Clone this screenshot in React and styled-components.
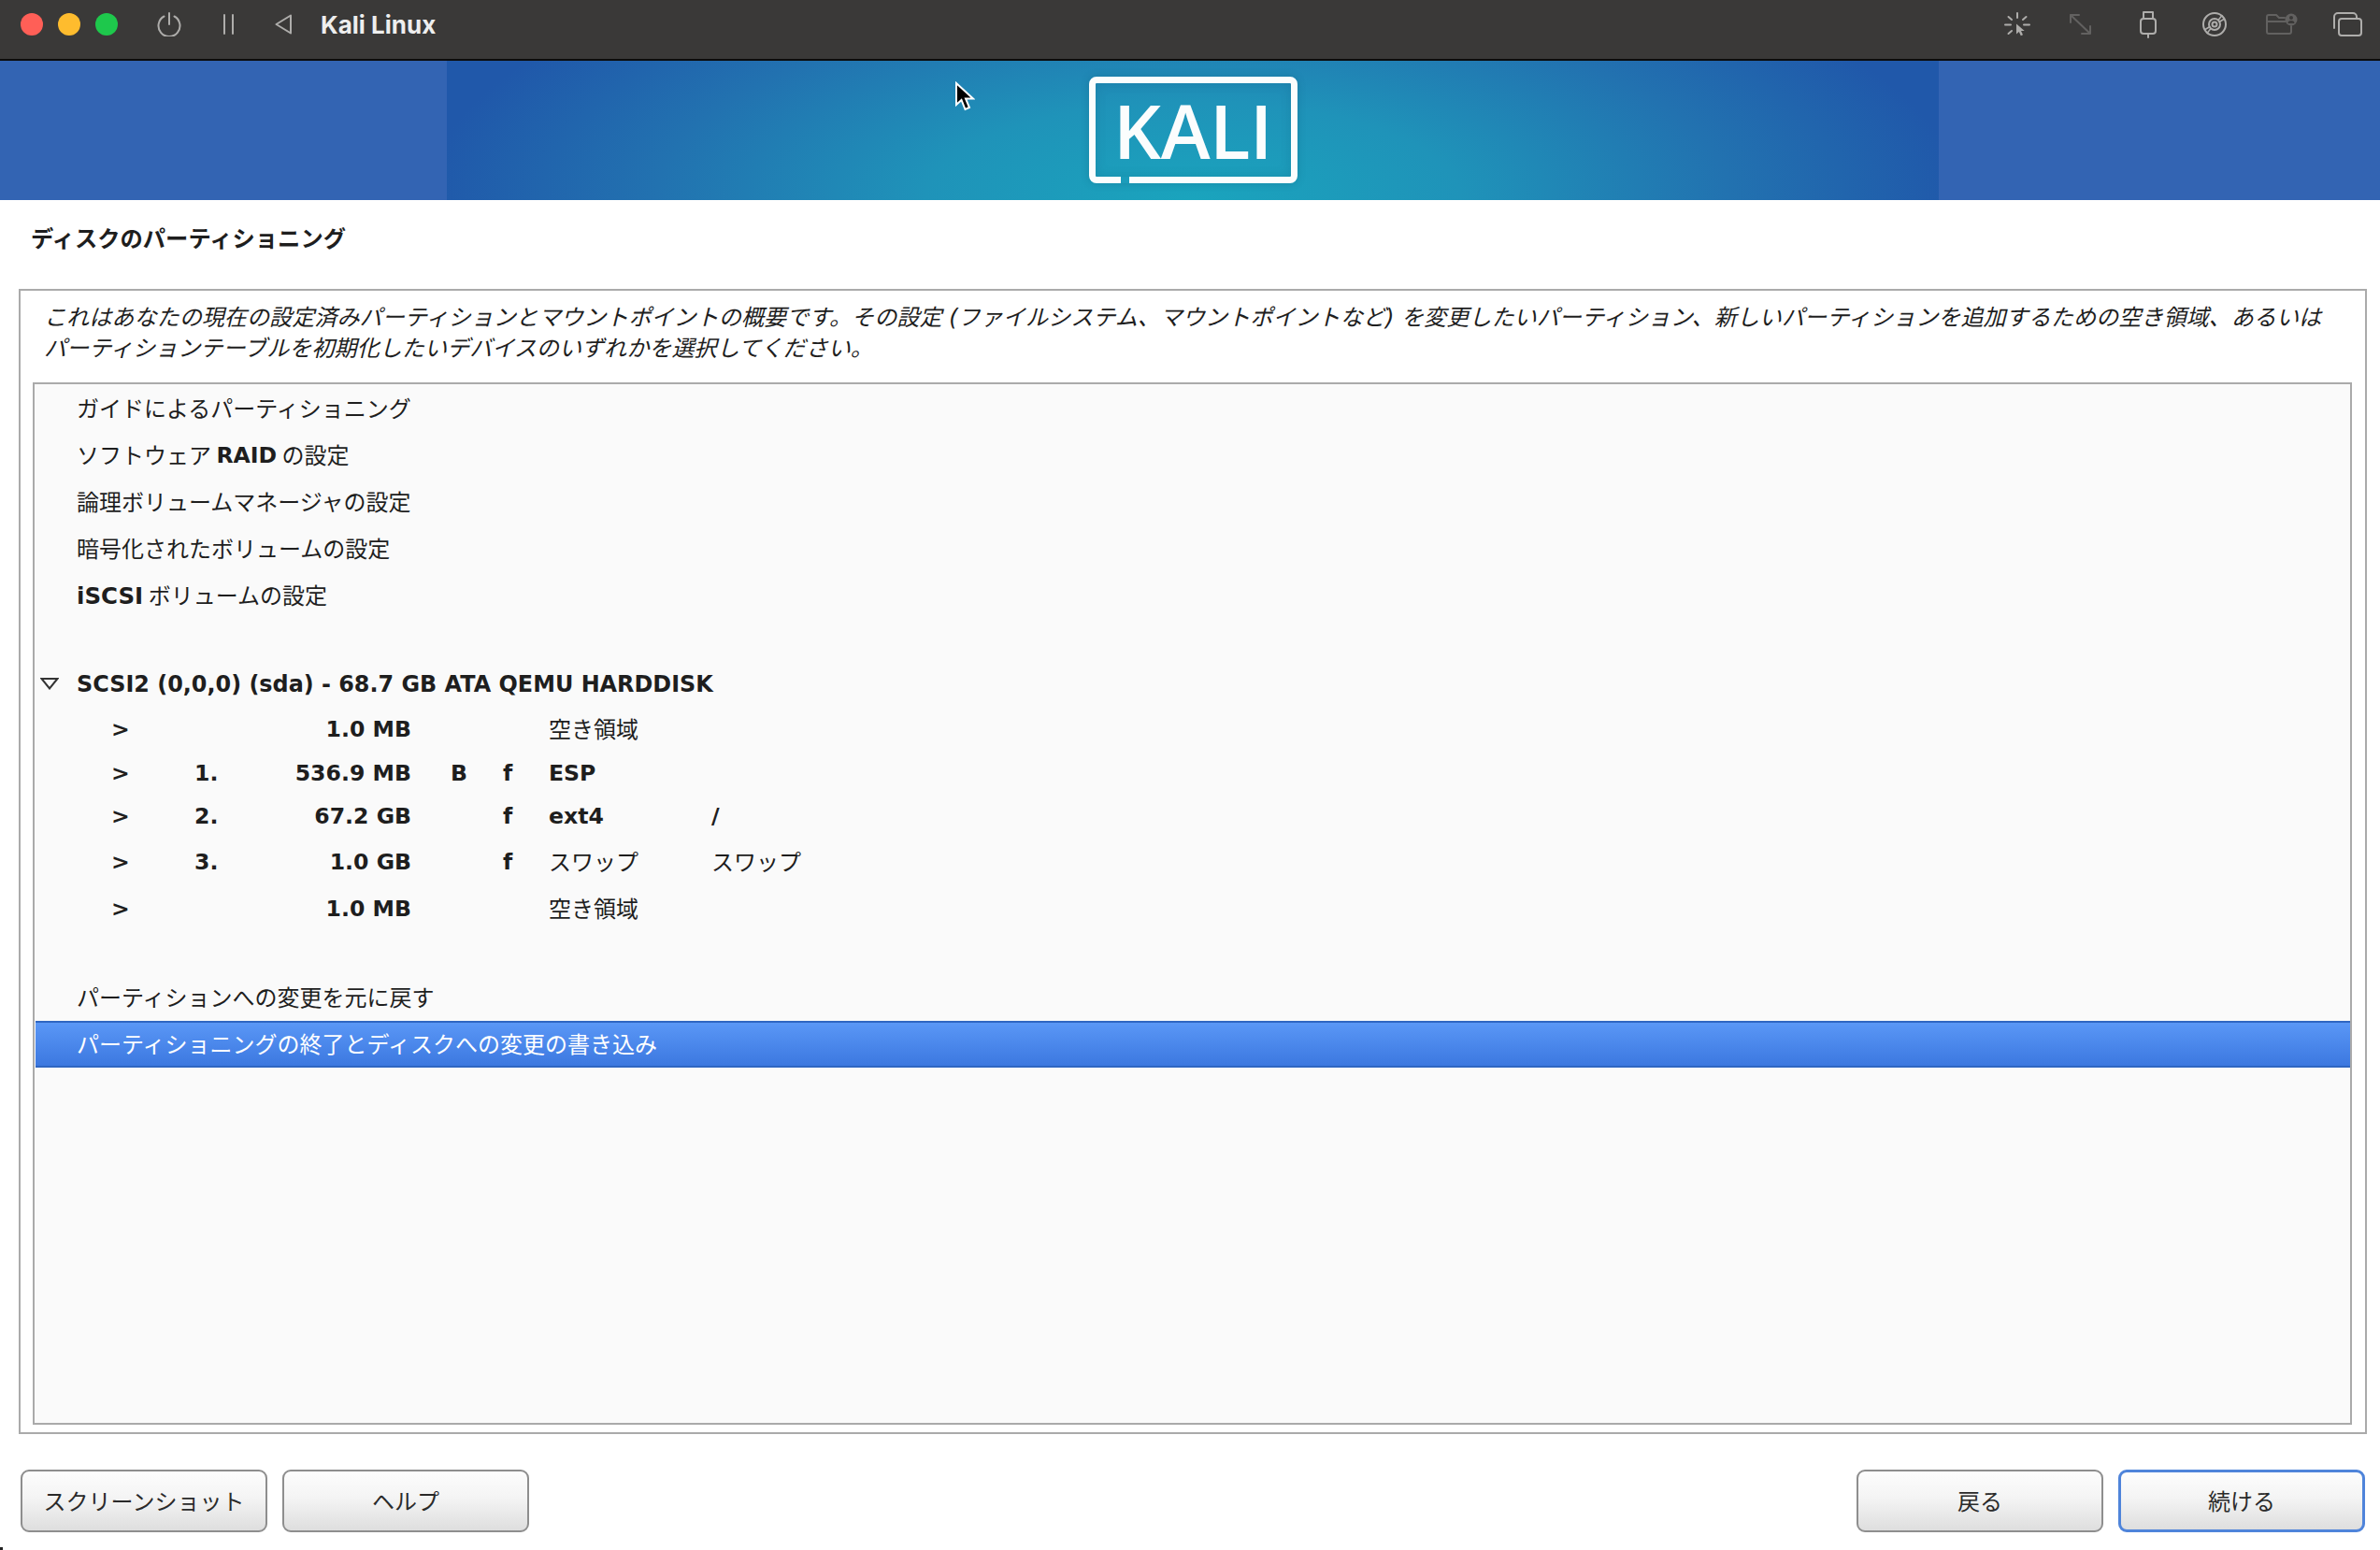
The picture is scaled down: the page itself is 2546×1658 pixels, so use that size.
import React from 'react';
import styled, { createGlobalStyle } from 'styled-components';

const GlobalStyle = createGlobalStyle`
  html, body {
    margin: 0;
    padding: 0;
    background: #fff;
  }
  * {
    box-sizing: border-box;
  }
`;

const BODY_FONT = `"DejaVu Sans", "Noto Sans CJK JP", sans-serif`;

const Page = styled.div`
  position: relative;
  width: 2546px;
  height: 1658px;
  overflow: hidden;
  display: flex;
  flex-direction: column;
  background: #fff;
  color: #1e1e1e;
  font-family: ${BODY_FONT};
  font-size: 24px;
`;

const TitleBar = styled.header`
  flex: none;
  height: 65px;
  padding: 0 19px 11px 22px;
  display: flex;
  align-items: center;
  background: #3a3938;
  border-bottom: 2px solid #0c0c0c;
`;

const Light = styled.span`
  width: 24px;
  height: 24px;
  margin-right: 16px;
  border-radius: 50%;
  background: ${(p) => p.$color};
`;

const Icon = styled.svg`
  flex: none;
  display: block;
  margin-left: ${(p) => p.$gap || 0}px;
  fill: none;
  stroke: ${(p) => (p.$dim ? '#626160' : '#aeadab')};
  stroke-width: 2;
  stroke-linecap: round;
  stroke-linejoin: round;
`;

const VmName = styled.span`
  margin-left: 31px;
  font-family: Inter, sans-serif;
  font-size: 26px;
  font-weight: 700;
  color: #eeeeee;
`;

const ToolIcons = styled.div`
  margin-left: auto;
  display: flex;
  align-items: center;
`;

const Banner = styled.div`
  flex: none;
  height: 149px;
  padding: 0 472px 0 478px;
  background: #3364b3;
`;

const BannerBand = styled.div`
  height: 100%;
  display: flex;
  justify-content: center;
  padding-top: 17px;
  background: radial-gradient(ellipse 820px 300px at 50% 100%, #1aa4bd 0%, #1f93b9 35%, #2272b0 70%, #2058aa 100%);
`;

const Logo = styled.div`
  position: relative;
  width: 223px;
  height: 114px;
  display: flex;
  align-items: center;
  justify-content: center;
  border: 7px solid #fbfdfd;
  border-radius: 8px;
  box-shadow: 0 0 8px rgba(10, 70, 100, 0.25), inset 0 0 12px rgba(10, 70, 100, 0.18);

  &::after {
    content: '';
    position: absolute;
    left: 27px;
    bottom: -7px;
    width: 9px;
    height: 7px;
    background: #1c9cba;
  }
`;

const LogoText = styled.span`
  font-family: "Open Sans", sans-serif;
  font-size: 80px;
  line-height: 1;
  font-weight: 600;
  letter-spacing: -0.5px;
  color: #fbfdfd;
`;

const Heading = styled.h1`
  flex: none;
  height: 95px;
  margin: 0;
  padding: 0 0 16px 33px;
  display: flex;
  align-items: center;
  font-size: 24.3px;
  font-weight: 700;
  font-family: "Noto Sans CJK JP", sans-serif;
`;

const Panel = styled.section`
  flex: none;
  height: 1225px;
  margin: 0 14px 0 20px;
  padding: 0 14px 8px 13px;
  display: flex;
  flex-direction: column;
  border: 2px solid #aaaaaa;
`;

const Intro = styled.p`
  flex: none;
  height: 98px;
  margin: 0;
  padding: 13px 0 0 12px;
  font-size: 24.12px;
  line-height: 33px;
  font-style: italic;
  white-space: nowrap;
`;

const ListBox = styled.div`
  flex: 1;
  padding-top: 1px;
  display: flex;
  flex-direction: column;
  background: #fafafa;
  border: 2px solid #aaaaaa;
  font-family: "Noto Sans CJK JP", sans-serif;
`;

const Strong = styled.span`
  font-family: "DejaVu Sans", sans-serif;
  font-weight: 700;
  font-size: ${(p) => p.$size || 23.6}px;
`;

const Row = styled.div`
  flex: none;
  height: ${(p) => p.$h || 50}px;
  margin-top: ${(p) => p.$top || 0}px;
  padding: 0 0 3px 45px;
  display: flex;
  align-items: center;

  ${Strong} {
    padding-top: 3px;
  }
`;

const DiskRow = styled(Row)`
  position: relative;
`;

const SelectedRow = styled(Row)`
  margin-left: 1px;
  padding-left: 44px;
  color: #ffffff;
  background: linear-gradient(#5a97f6, #3c78e0);
  border-top: 2px solid #2f66c2;
  border-bottom: 2px solid #2f66c2;
`;

const PartitionRow = styled.div`
  flex: none;
  height: ${(p) => p.$h || 47}px;
  padding-left: 82px;
  display: grid;
  grid-template-columns: 89px 76px 156px 42px 56px 49px 174px 1fr;
  align-items: center;
`;

const SizeCell = styled(Strong)`
  text-align: right;
`;

const KanaCell = styled.span`
  padding-bottom: 3px;
`;

const Disclosure = styled.svg`
  position: absolute;
  left: 6px;
  top: 18px;
  fill: none;
  stroke: #333333;
  stroke-width: 2;
`;

const Footer = styled.footer`
  flex: 1;
  padding: 38px 16px 0 22px;
  display: flex;
  justify-content: space-between;
  align-items: flex-start;
`;

const ButtonGroup = styled.div`
  display: flex;
  gap: 16px;
`;

const Button = styled.button`
  width: 264px;
  height: 67px;
  padding: 0 0 3px;
  font-family: "Noto Sans CJK JP", sans-serif;
  font-size: 24px;
  color: #2a2a2a;
  background: linear-gradient(#fdfdfd, #f4f4f4 45%, #dedede);
  border: ${(p) => (p.$focused ? '3px solid #4f84da' : '2px solid #8e8e8e')};
  border-radius: 9px;
`;

const MouseCursor = styled.svg`
  position: absolute;
  left: 1021px;
  top: 87px;
`;

const CornerMark = styled.i`
  position: absolute;
  left: 0;
  bottom: 0;
  width: 3px;
  height: 3px;
  background: #222222;
`;

const partitions = [
  { num: '', size: '1.0 MB', flag: '', fs: '', type: '空き領域', mount: '', h: 46 },
  { num: '1.', size: '536.9 MB', flag: 'B', fs: 'f', latin: 'ESP', mount: '', h: 48 },
  { num: '2.', size: '67.2 GB', flag: '', fs: 'f', latin: 'ext4', mount: '/', h: 44 },
  { num: '3.', size: '1.0 GB', flag: '', fs: 'f', type: 'スワップ', mount: 'スワップ', h: 54 },
  { num: '', size: '1.0 MB', flag: '', fs: '', type: '空き領域', mount: '', h: 46 },
];

const App = () => {
  return (
    <Page>
      <GlobalStyle />

      <TitleBar>
        <Light $color="#ff5f57" />
        <Light $color="#febc2e" />
        <Light $color="#1ec84c" />

        <Icon width="26" height="26" viewBox="0 0 26 26" $gap={26}>
          <path d="M7.5 4.5a11.5 11.5 0 1 0 11 0" />
          <path d="M13 1v12" />
        </Icon>
        <Icon width="11" height="22" viewBox="0 0 11 22" $gap={45}>
          <path d="M1 1v20M10 1v20" />
        </Icon>
        <Icon width="18" height="22" viewBox="0 0 18 22" $gap={44}>
          <path d="M17 1.5 1.5 11 17 20.5z" />
        </Icon>
        <VmName>Kali Linux</VmName>

        <ToolIcons>
          <Icon width="28" height="27" viewBox="0 0 28 27">
            <path d="M14 1v5M1 13.5h6M21 13.5h6M4.5 5l3.5 3M23.5 5 20 8M4.5 23l3.5-3" />
            <path d="M13 12.5v11l2.8-2.4 2 4.2 2.2-1-2-4.2h3.7z" fill="#aeadab" stroke="none" />
          </Icon>
          <Icon width="25" height="24" viewBox="0 0 25 24" $gap={41} $dim>
            <path d="M2 2l21 20M2 10V2h9M23 14v8h-9" />
          </Icon>
          <Icon width="18" height="30" viewBox="0 0 18 30" $gap={51}>
            <path d="M4 9V2h10v7" />
            <rect x="1" y="9" width="16" height="16" rx="3" />
            <path d="M9 25v4" />
          </Icon>
          <Icon width="26" height="26" viewBox="0 0 26 26" $gap={49}>
            <circle cx="13" cy="13" r="12" />
            <circle cx="13" cy="13" r="6" />
            <circle cx="13" cy="13" r="2.5" />
            <path d="M17 8.5 21 3.5M18 10.5l5-3M9 17.5 5 22.5M8 15.5l-5 3" strokeWidth="1.5" />
          </Icon>
          <Icon width="34" height="24" viewBox="0 0 34 24" $gap={42} $dim>
            <path d="M1 9V4a2 2 0 0 1 2-2h8l3 3h6M1 9h20M1 9v11a2 2 0 0 0 2 2h22a2 2 0 0 0 2-2v-6" />
            <circle cx="27" cy="7" r="6.5" fill="#626160" stroke="none" />
            <circle cx="27" cy="5" r="2" fill="#3a3938" stroke="none" />
            <path d="M23.5 11a3.5 3 0 0 1 7 0z" fill="#3a3938" stroke="none" />
          </Icon>
          <Icon width="32" height="26" viewBox="0 0 32 26" $gap={37}>
            <path d="M2 17V5a4 4 0 0 1 4-4h16a4 4 0 0 1 4 4v2" />
            <rect x="7" y="7" width="24" height="18" rx="3" />
          </Icon>
        </ToolIcons>
      </TitleBar>

      <Banner>
        <BannerBand>
          <Logo>
            <LogoText>KALI</LogoText>
          </Logo>
        </BannerBand>
      </Banner>

      <Heading>ディスクのパーティショニング</Heading>

      <Panel>
        <Intro>
          これはあなたの現在の設定済みパーティションとマウントポイントの概要です。その設定 (ファイルシステム、マウントポイントなど) を変更したいパーティション、新しいパーティションを追加するための空き領域、あるいは
          <br />
          パーティションテーブルを初期化したいデバイスのいずれかを選択してください。
        </Intro>

        <ListBox>
          <Row>ガイドによるパーティショニング</Row>
          <Row>ソフトウェア&nbsp;<Strong>RAID</Strong>&nbsp;の設定</Row>
          <Row>論理ボリュームマネージャの設定</Row>
          <Row>暗号化されたボリュームの設定</Row>
          <Row><Strong $size={24.5}>iSCSI</Strong>&nbsp;ボリュームの設定</Row>

          <DiskRow $top={45}>
            <Disclosure width="20" height="13" viewBox="0 0 20 13">
              <path d="M1.5 1h17L10 11.5z" />
            </Disclosure>
            <Strong $size={23.9}>SCSI2 (0,0,0) (sda) - 68.7 GB ATA QEMU HARDDISK</Strong>
          </DiskRow>

          {partitions.map((p, i) => (
            <PartitionRow key={i} $h={p.h}>
              <Strong>&gt;</Strong>
              <Strong>{p.num}</Strong>
              <SizeCell>{p.size}</SizeCell>
              <span />
              <Strong>{p.flag}</Strong>
              <Strong>{p.fs}</Strong>
              {p.latin ? <Strong>{p.latin}</Strong> : <KanaCell>{p.type}</KanaCell>}
              {p.mount === '/' ? <Strong>/</Strong> : <KanaCell>{p.mount}</KanaCell>}
            </PartitionRow>
          ))}

          <Row $top={47}>パーティションへの変更を元に戻す</Row>
          <SelectedRow>パーティショニングの終了とディスクへの変更の書き込み</SelectedRow>
        </ListBox>
      </Panel>

      <Footer>
        <ButtonGroup>
          <Button>スクリーンショット</Button>
          <Button>ヘルプ</Button>
        </ButtonGroup>
        <ButtonGroup>
          <Button>戻る</Button>
          <Button $focused>続ける</Button>
        </ButtonGroup>
      </Footer>

      <MouseCursor width="22" height="33" viewBox="0 0 22 33">
        <path d="M2 2v23l5.5-5 4 10 4.5-2-4-9.5h8z" fill="#000" stroke="#fff" strokeWidth="2" />
      </MouseCursor>
      <CornerMark />
    </Page>
  );
};

export default App;
